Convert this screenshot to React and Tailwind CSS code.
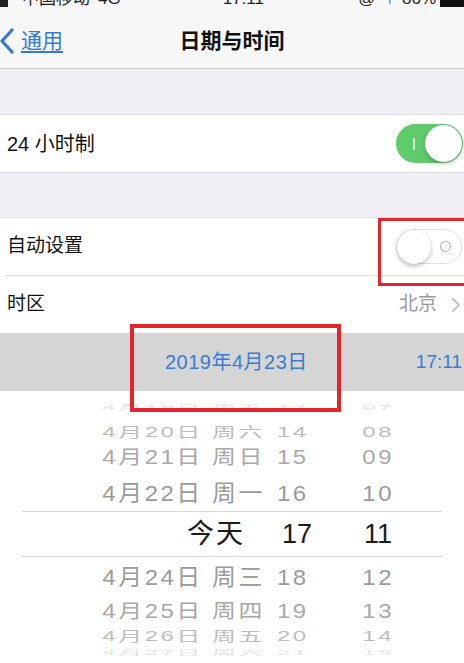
import React from 'react';

const font = { fontFamily: '"Liberation Sans", "Noto Sans CJK SC", sans-serif' };

const pickerRows = [
  { h: 'h-[32px]', date: '4月19日 周五', hour: '13', min: '07', cls: 'text-[#e4e4e4] scale-y-[0.28] items-end' },
  { h: 'h-[18px]', date: '4月20日 周六', hour: '14', min: '08', cls: 'text-[#bdbdbd] scale-y-[0.58] items-center' },
  { h: 'h-[33px]', date: '4月21日 周日', hour: '15', min: '09', cls: 'text-[#a9a9a9] scale-y-[0.82] items-center' },
  { h: 'h-[37px]', date: '4月22日 周一', hour: '16', min: '10', cls: 'text-[#9b9b9b] scale-y-[0.95] items-center' },
];

const lowerRows = [
  { h: 'h-[39px]', date: '4月24日 周三', hour: '18', min: '12', cls: 'text-[#9b9b9b] scale-y-[0.95] items-center' },
  { h: 'h-[31px]', date: '4月25日 周四', hour: '19', min: '13', cls: 'text-[#a9a9a9] scale-y-[0.82] items-center' },
  { h: 'h-[18px]', date: '4月26日 周五', hour: '20', min: '14', cls: 'text-[#bdbdbd] scale-y-[0.58] items-center' },
  { h: 'h-[12px]', date: '4月27日 周六', hour: '21', min: '15', cls: 'text-[#e4e4e4] scale-y-[0.28] items-start' },
];

function PickerRow({ row }) {
  return (
    <div className={`flex ${row.h} text-[24px] leading-none tracking-[2.5px] overflow-hidden`}>
      <div className={`flex w-full ${row.cls}`}>
        <span className="w-[265px] text-right">{row.date}</span>
        <span className="ml-[12px] w-[50px]">{row.hour}</span>
        <span className="w-[67px] text-right">{row.min}</span>
      </div>
    </div>
  );
}

function ToggleOn() {
  return (
    <div className="flex h-[39px] w-[67px] items-center justify-between rounded-full bg-[#5fcb6b] pl-[17px] pr-[1px]">
      <span className="h-[12px] w-[2px] bg-white/80" />
      <span className="h-[37px] w-[37px] rounded-full bg-white shadow-[0_2px_4px_rgba(0,0,0,0.25)]" />
    </div>
  );
}

function ToggleOff() {
  return (
    <div className="flex h-[35px] w-[66px] items-center rounded-full border border-[#e2e2e2] bg-white">
      <span className="h-[34px] w-[34px] rounded-full bg-white shadow-[0_2px_4px_rgba(0,0,0,0.28)]" />
      <span className="ml-auto mr-[10px] h-[11px] w-[11px] rounded-full border-[1.5px] border-[#b2b2b2]" />
    </div>
  );
}

export default function App() {
  return (
    <div className="relative h-[663px] w-[464px] overflow-hidden bg-white text-[#111]" style={font}>
      {/* status + nav */}
      <div className="border-b border-[#cfcfd3] bg-[#f7f7f7]">
        <div className="flex h-[7px] items-end overflow-hidden text-[17px] leading-none text-[#222]">
          <div className="flex w-full items-end">
            <span className="mr-[14px] h-[12px] w-[8px] bg-[#222]" />
            <span>中国移动</span>
            <span className="ml-[8px]">4G</span>
            <span className="ml-[102px]">17:11</span>
            <span className="ml-auto">@</span>
            <span className="ml-[10px]">↑</span>
            <span className="ml-[8px]">86%</span>
            <span className="ml-[4px] h-[12px] w-[24px] bg-[#111]" />
          </div>
        </div>
        <div className="flex h-[61px] items-center pt-[6px]">
          <div className="flex w-[120px] items-center text-[#3478d8]">
            <svg width="16" height="26" viewBox="0 0 16 26" className="ml-[-1px]">
              <path d="M13 2 L3 13 L13 24" fill="none" stroke="currentColor" strokeWidth="3.2" strokeLinecap="round" strokeLinejoin="round" />
            </svg>
            <span className="ml-[6px] text-[21px] leading-none underline underline-offset-[3px]">通用</span>
          </div>
          <div className="flex-1 text-center text-[21px] font-semibold leading-none">日期与时间</div>
          <div className="w-[120px]" />
        </div>
      </div>

      <div className="h-[46px] border-b border-[#dedee2] bg-[#efeff4]" />

      <div className="flex h-[57px] items-center justify-between bg-white pl-[7px] pr-[1px]">
        <span className="text-[20px]">24 小时制</span>
        <ToggleOn />
      </div>

      <div className="h-[46px] border-y border-[#dedee2] bg-[#efeff4]" />

      <div className="bg-white">
        <div className="flex h-[57px] items-center justify-between pl-[7px] pr-[2px]">
          <span className="text-[19px]">自动设置</span>
          <ToggleOff />
        </div>
        <div className="ml-[5px] h-px bg-[#dcdcdc]" />
        <div className="flex h-[57px] items-center justify-between pl-[7px] pr-[3px]">
          <span className="text-[19px]">时区</span>
          <div className="flex items-center text-[19px] text-[#9a9a9e]">
            <span>北京</span>
            <svg width="10" height="16" viewBox="0 0 10 16" className="ml-[14px]">
              <path d="M2 2 L8 8 L2 14" fill="none" stroke="#c4c4c8" strokeWidth="2" strokeLinecap="round" strokeLinejoin="round" />
            </svg>
          </div>
        </div>
      </div>

      <div className="flex h-[58px] items-center bg-[#d5d5d5] text-[#3a7bd5]">
        <span className="ml-[165px] text-[20px] tracking-[0.5px]">2019年4月23日</span>
        <span className="ml-auto mr-[2px] text-[19px]">17:11</span>
      </div>

      {/* picker */}
      <div>
        {pickerRows.map((row) => (
          <PickerRow key={row.date} row={row} />
        ))}
        <div className="mx-[22px] h-px bg-[#dadada]" />
        <div className="flex h-[44px] items-center text-[27px] leading-none text-[#1c1c1c]">
          <span className="w-[245px] text-right tracking-[2px]">今天</span>
          <span className="ml-[37px] w-[45px]">17</span>
          <span className="w-[65px] text-right">11</span>
        </div>
        <div className="mx-[22px] h-px bg-[#dadada]" />
        {lowerRows.map((row) => (
          <PickerRow key={row.date} row={row} />
        ))}
      </div>

      {/* red annotation boxes */}
      <div className="absolute left-[378px] top-[218px] h-[68px] w-[92px] border-[3px] border-[#e3262b]" />
      <div className="absolute left-[130px] top-[324px] h-[88px] w-[211px] border-[4px] border-[#e3262b]" />
    </div>
  );
}
